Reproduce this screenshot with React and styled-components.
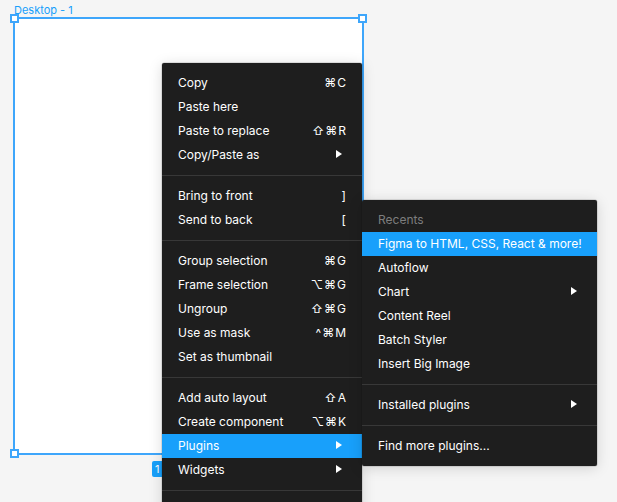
import styled, { createGlobalStyle } from "styled-components"

const Global = createGlobalStyle`
    html, body {
        margin: 0;
        padding: 0;
        overflow: hidden;
    }
    body {
        font-family: Inter, "Noto Sans", sans-serif;
        -webkit-font-smoothing: antialiased;
    }
`

const Canvas = styled.div`
    position: relative;
    width: 617px;
    height: 502px;
    background-color: #f5f5f5;
    overflow: hidden;
`

const FrameLabel = styled.div`
    position: absolute;
    left: 14px;
    top: 2px;
    font-size: 11px;
    line-height: 16px;
    color: #18a0fb;
`

const Frame = styled.div`
    position: absolute;
    left: 13px;
    top: 17px;
    width: 351px;
    height: 438px;
    box-sizing: border-box;
    background-color: #fff;
    border: 2px solid #3ea6fb;
`

const Handle = styled.div`
    position: absolute;
    width: 9px;
    height: 9px;
    box-sizing: border-box;
    background-color: #fff;
    border: 2px solid #3ea6fb;
    left: ${p => p.$right ? "auto" : "-5px"};
    right: ${p => p.$right ? "-5px" : "auto"};
    top: ${p => p.$bottom ? "auto" : "-5px"};
    bottom: ${p => p.$bottom ? "-5px" : "auto"};
`

const Badge = styled.div`
    position: absolute;
    left: 137px;
    bottom: -24px;
    width: 16px;
    height: 16px;
    border-radius: 2px;
    background-color: #18a0fb;
    color: #fff;
    font-size: 11px;
    line-height: 16px;
    padding-left: 3px;
    box-sizing: border-box;
`

const Menu = styled.div`
    position: absolute;
    left: ${p => p.$left}px;
    top: ${p => p.$top}px;
    width: ${p => p.$width}px;
    padding: 8px 0 ${p => p.$tail || 8}px;
    background-color: #1e1e1e;
    border-radius: 2px;
    box-shadow: 0 2px 14px rgba(0, 0, 0, 0.15), 0 0 0 0.5px rgba(0, 0, 0, 0.2);
    color: #fff;
    font-size: 12px;
`

const Item = styled.div`
    display: flex;
    align-items: center;
    justify-content: space-between;
    height: 24px;
    padding: 0 16px 2px;
    box-sizing: border-box;
    white-space: nowrap;
    background-color: ${p => p.$active ? "#18a0fb" : "transparent"};
    color: ${p => p.$muted ? "#7d7d7d" : "#fff"};
`

const Shortcut = styled.span`
    font-family: Inter, "DejaVu Sans", sans-serif;
    letter-spacing: 1px;
    margin-right: -1px;
`

const Arrow = styled.span`
    width: 0;
    height: 0;
    margin-right: 4px;
    border-top: 4px solid transparent;
    border-bottom: 4px solid transparent;
    border-left: 6px solid #fff;
`

const Divider = styled.div`
    height: 1px;
    margin: 8px 0;
    background-color: #383838;
`

const mainGroups = [
    [
        ["Copy", "⌘C"],
        ["Paste here"],
        ["Paste to replace", "⇧⌘R"],
        ["Copy/Paste as", ">"],
    ],
    [
        ["Bring to front", "]"],
        ["Send to back", "["],
    ],
    [
        ["Group selection", "⌘G"],
        ["Frame selection", "⌥⌘G"],
        ["Ungroup", "⇧⌘G"],
        ["Use as mask", "^⌘M"],
        ["Set as thumbnail"],
    ],
    [
        ["Add auto layout", "⇧A"],
        ["Create component", "⌥⌘K"],
        ["Plugins", ">", true],
        ["Widgets", ">"],
    ],
    [],
]

const subGroups = [
    [
        ["Recents", null, false, true],
        ["Figma to HTML, CSS, React & more!", null, true],
        ["Autoflow"],
        ["Chart", ">"],
        ["Content Reel"],
        ["Batch Styler"],
        ["Insert Big Image"],
    ],
    [
        ["Installed plugins", ">"],
    ],
    [
        ["Find more plugins..."],
    ],
]

const MenuItems = ({ groups }) => groups.map((group, gi) => (
    <div key={gi}>
        {gi > 0 && <Divider />}
        {group.map(([label, right, active, muted]) => (
            <Item key={label} $active={active} $muted={muted}>
                <span>{label}</span>
                {right === ">" ? <Arrow /> : right && <Shortcut>{right}</Shortcut>}
            </Item>
        ))}
    </div>
))

const App = () => {
    return (
        <Canvas>
            <Global />
            <FrameLabel>Desktop - 1</FrameLabel>
            <Frame>
                <Handle />
                <Handle $right />
                <Handle $bottom />
                <Handle $right $bottom />
                <Badge>1</Badge>
            </Frame>
            <Menu $left={162} $top={63} $width={200} $tail={40}>
                <MenuItems groups={mainGroups} />
            </Menu>
            <Menu $left={362} $top={200} $width={235}>
                <MenuItems groups={subGroups} />
            </Menu>
        </Canvas>
    )
}

export default App
